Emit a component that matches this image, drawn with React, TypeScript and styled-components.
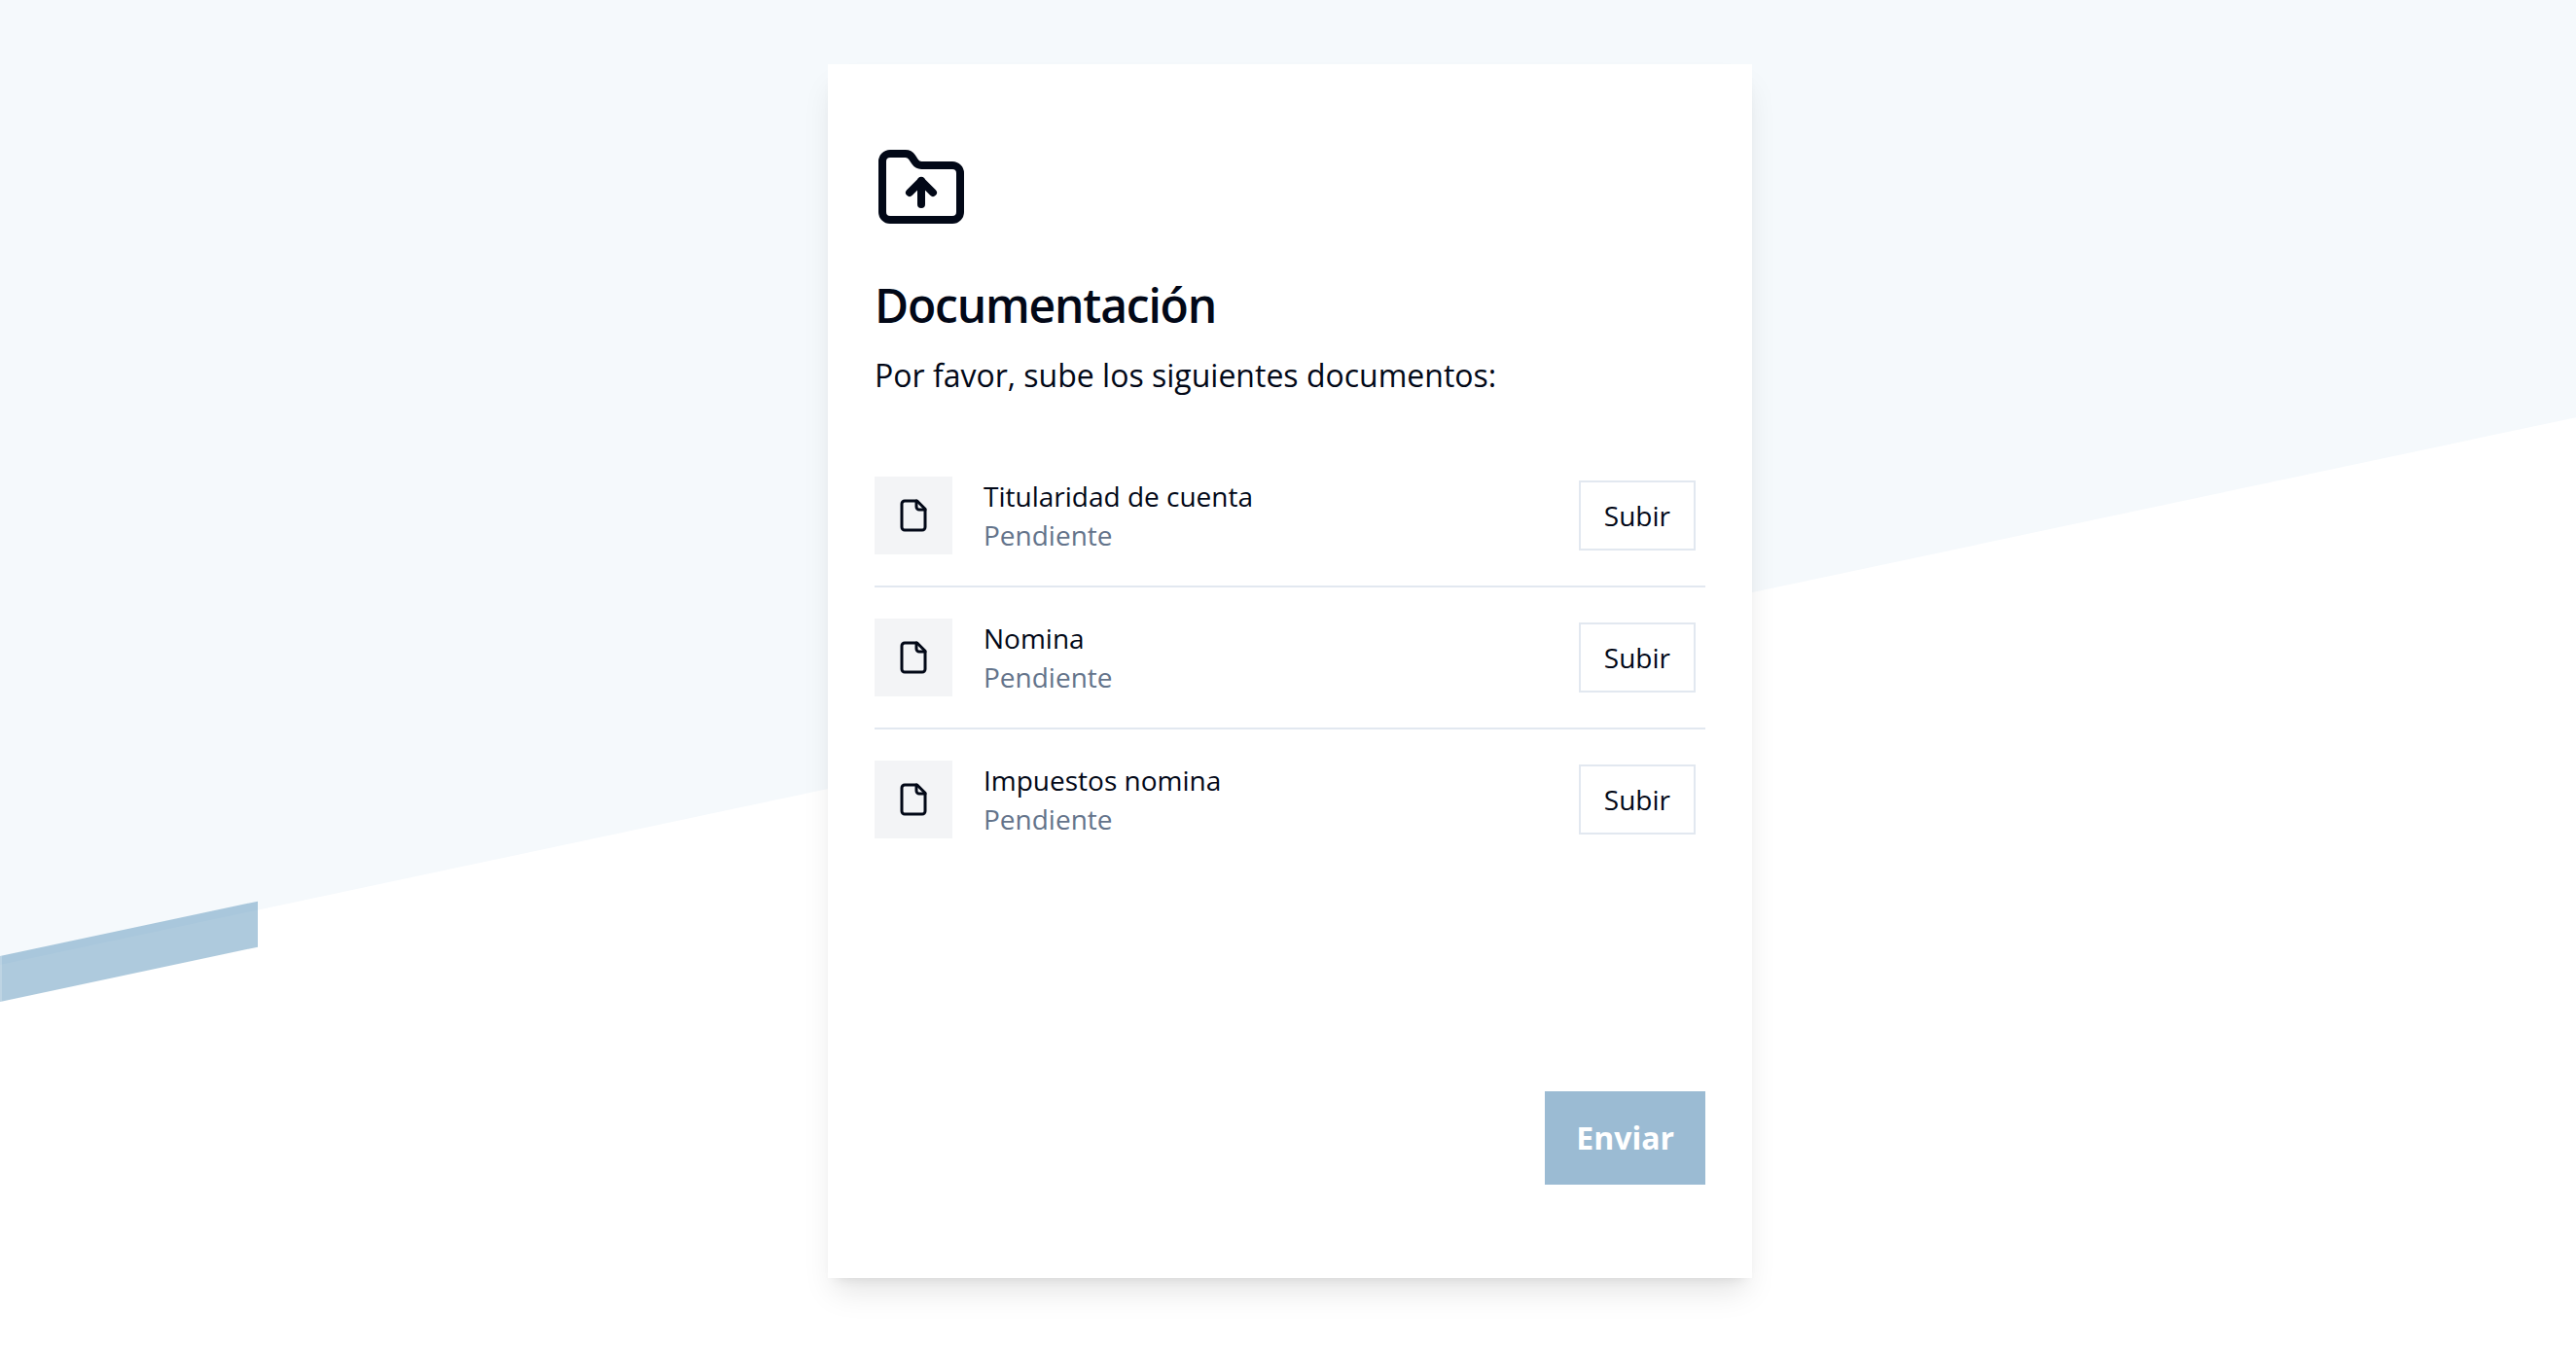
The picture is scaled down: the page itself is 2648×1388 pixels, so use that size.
import React from "react";
import styled, { createGlobalStyle } from "styled-components";

const GlobalStyle = createGlobalStyle`
  *, *::before, *::after { box-sizing: border-box; }
  body {
    margin: 0;
    background: #ffffff;
    color: #020817;
    font-family: "Open Sans", "Noto Sans", sans-serif;
  }
`;

const Page = styled.main`
  position: relative;
  display: flex;
  justify-content: center;
  min-height: 100vh;
  padding: 66px 0 74px 4px;
  overflow: hidden;
`;

const Backdrop = styled.div`
  position: absolute;
  inset: 0 0 auto 0;
  height: 992px;
  background: #f5f9fc;
  transform: skewY(-12deg);
  transform-origin: 0 0;

  &::before {
    content: "";
    position: absolute;
    left: 0;
    right: 0;
    bottom: 100%;
    height: 100%;
    background: inherit;
  }

  &::after {
    content: "";
    position: absolute;
    left: 0;
    bottom: -38px;
    width: 10%;
    height: 47px;
    background: rgba(93, 149, 187, 0.5);
    border-left: 2px solid rgba(255, 255, 255, 0.2);
  }
`;

const Card = styled.section`
  position: relative;
  display: flex;
  flex-direction: column;
  width: 100%;
  max-width: 950px;
  min-height: calc(100vh - 140px);
  padding: 80px 48px 96px;
  background: #ffffff;
  box-shadow: 0 20px 30px -6px rgba(0, 0, 0, 0.1), 0 8px 12px -8px rgba(0, 0, 0, 0.1);
`;

const Icon = styled.svg<{ $size: number }>`
  display: block;
  width: ${(p) => p.$size}px;
  height: ${(p) => p.$size}px;
  fill: none;
  stroke: currentColor;
  stroke-width: 2;
  stroke-linecap: round;
  stroke-linejoin: round;
`;

const Title = styled.h1`
  margin: 40px 0 16px;
  font-size: 48px;
  line-height: 64px;
  font-weight: 600;
  letter-spacing: -0.025em;
`;

const Intro = styled.p`
  margin: 0 0 48px;
  font-size: 32px;
  line-height: 48px;
`;

const List = styled.ul`
  margin: 0;
  padding: 0;
  list-style: none;
`;

const Row = styled.li`
  display: flex;
  align-items: center;
  gap: 32px;
  padding: 32px 10px 32px 0;

  & + & {
    border-top: 2px solid #e2e8f0;
  }
`;

const Tile = styled.div`
  display: grid;
  place-items: center;
  width: 80px;
  height: 80px;
  background: #f3f4f6;
`;

const Details = styled.div`
  flex: 1;
  font-size: 28px;
  line-height: 40px;
`;

const Status = styled.div`
  color: #64748b;
`;

const UploadButton = styled.button`
  height: 72px;
  padding: 0 24px;
  border: 2px solid #e2e8f0;
  background: #ffffff;
  color: inherit;
  font: inherit;
  font-size: 28px;
  line-height: 40px;
`;

const SubmitButton = styled.button`
  align-self: flex-end;
  height: 96px;
  margin-top: auto;
  padding: 0 32px;
  border: 0;
  background: #9bbbd3;
  color: #ffffff;
  font: inherit;
  font-size: 32px;
  line-height: 48px;
  font-weight: 700;
`;

const FolderUpIcon = () => (
  <Icon $size={96} viewBox="0 0 24 24" aria-hidden="true">
    <path d="M20 20a2 2 0 0 0 2-2V8a2 2 0 0 0-2-2h-7.900a2 2 0 0 1-1.690-.900L9.600 3.900A2 2 0 0 0 7.930 3H4a2 2 0 0 0-2 2v13a2 2 0 0 0 2 2Z" />
    <path d="M12 10v6" />
    <path d="m9 13 3-3 3 3" />
  </Icon>
);

const FileIcon = () => (
  <Icon $size={36} viewBox="0 0 24 24" aria-hidden="true">
    <path d="M14.500 2H6a2 2 0 0 0-2 2v16a2 2 0 0 0 2 2h12a2 2 0 0 0 2-2V7.500Z" />
    <path d="M14 2v4a2 2 0 0 0 2 2h4" />
  </Icon>
);

const documents = [
  { name: "Titularidad de cuenta", status: "Pendiente" },
  { name: "Nomina", status: "Pendiente" },
  { name: "Impuestos nomina", status: "Pendiente" },
];

export default function App() {
  return (
    <>
      <GlobalStyle />
      <Page>
        <Backdrop />
        <Card>
          <FolderUpIcon />
          <Title>Documentación</Title>
          <Intro>Por favor, sube los siguientes documentos:</Intro>
          <List>
            {documents.map((doc) => (
              <Row key={doc.name}>
                <Tile>
                  <FileIcon />
                </Tile>
                <Details>
                  <div>{doc.name}</div>
                  <Status>{doc.status}</Status>
                </Details>
                <UploadButton type="button">Subir</UploadButton>
              </Row>
            ))}
          </List>
          <SubmitButton type="button">Enviar</SubmitButton>
        </Card>
      </Page>
    </>
  );
}
